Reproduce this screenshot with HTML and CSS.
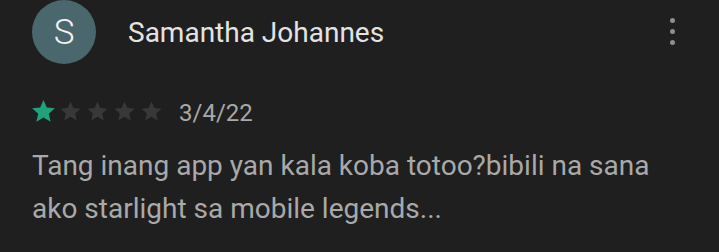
FILE: index.html
```html
<!DOCTYPE html>
<html>
<head>
<meta charset="utf-8">
<link rel="stylesheet" href="styles.css">
</head>
<body>
<div class="review">
  <div class="header">
    <div class="avatar">S</div>
    <div class="name">Samantha Johannes</div>
    <div class="more" aria-label="More">
      <span class="dot"></span><span class="dot"></span><span class="dot"></span>
    </div>
  </div>
  <div class="meta">
    <div class="stars">
      <svg class="star on" viewBox="1.5 1.5 21 21"><path d="M12 1.5l3 6.9 7.4.7-5.6 4.9 1.7 7.3-6.5-3.9-6.5 3.9 1.7-7.3-5.6-4.9 7.4-.7z"/></svg>
      <svg class="star off" viewBox="1.5 1.5 21 21"><path d="M12 1.5l3 6.9 7.4.7-5.6 4.9 1.7 7.3-6.5-3.9-6.5 3.9 1.7-7.3-5.6-4.9 7.4-.7z"/></svg>
      <svg class="star off" viewBox="1.5 1.5 21 21"><path d="M12 1.5l3 6.9 7.4.7-5.6 4.9 1.7 7.3-6.5-3.9-6.5 3.9 1.7-7.3-5.6-4.9 7.4-.7z"/></svg>
      <svg class="star off" viewBox="1.5 1.5 21 21"><path d="M12 1.5l3 6.9 7.4.7-5.6 4.9 1.7 7.3-6.5-3.9-6.5 3.9 1.7-7.3-5.6-4.9 7.4-.7z"/></svg>
      <svg class="star off" viewBox="1.5 1.5 21 21"><path d="M12 1.5l3 6.9 7.4.7-5.6 4.9 1.7 7.3-6.5-3.9-6.5 3.9 1.7-7.3-5.6-4.9 7.4-.7z"/></svg>
    </div>
    <span class="date">3/4/22</span>
  </div>
  <p class="text">Tang inang app yan kala koba totoo?bibili na sana ako starlight sa mobile legends...</p>
</div>
</body>
</html>
```
FILE: styles.css
```css
html, body {
  margin: 0;
  padding: 0;
  background: #1f1f1f;
}
body {
  width: 719px;
  height: 252px;
  overflow: hidden;
  font-family: Roboto, "Liberation Sans", sans-serif;
}
.review {
  padding: 0 32px;
}
.header {
  display: flex;
  align-items: center;
  height: 64px;
}
.avatar {
  width: 64px;
  height: 64px;
  border-radius: 50%;
  background: #4a676d;
  color: #f2f2f2;
  font-size: 35px;
  font-weight: 300;
  display: flex;
  align-items: center;
  justify-content: center;
  flex-shrink: 0;
}
.name {
  margin-left: 32px;
  font-size: 28px;
  color: #e3e3e3;
  flex: 1;
}
.more {
  display: flex;
  flex-direction: column;
  align-items: center;
  gap: 6px;
  width: 24px;
  margin-right: 3px;
  margin-top: -2px;
}
.dot {
  width: 5px;
  height: 5px;
  border-radius: 50%;
  background: #8f8f8f;
}
.meta {
  display: flex;
  align-items: center;
  margin-top: 35px;
  height: 25px;
}
.stars {
  display: flex;
  gap: 4px;
}
.star {
  width: 23px;
  height: 23px;
  fill: #383838;
}
.star.off {
  transform: scale(0.88);
}
.star.on {
  fill: #1fa37a;
}
.date {
  margin-left: 16px;
  margin-top: 3px;
  font-size: 24px;
  color: #a8a8a8;
}
.text {
  margin: 20px 0 0;
  width: 650px;
  font-size: 28px;
  line-height: 43px;
  color: #a9a9a9;
}
```
